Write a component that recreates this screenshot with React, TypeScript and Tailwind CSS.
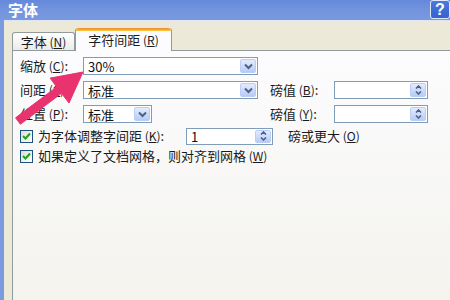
import React from "react";

const font = "font-['SimSun','Noto_Sans_CJK_SC',sans-serif]";

function Chevron() {
  return (
    <svg width="9" height="7" viewBox="0 0 9 7">
      <path d="M1 1.5 L4.5 5 L8 1.5" fill="none" stroke="#4d6185" strokeWidth="2" />
    </svg>
  );
}

function DropBtn() {
  return (
    <div className="w-[16px] h-full border border-[#b9cdf8] rounded-[2px] bg-gradient-to-b from-[#e4ecfd] to-[#b7cbf6] flex items-center justify-center">
      <Chevron />
    </div>
  );
}

function SpinBtn() {
  return (
    <div className="w-[16px] h-full border border-[#b9cdf8] rounded-[2px] bg-gradient-to-b from-[#e4ecfd] to-[#b7cbf6] flex flex-col items-center justify-center gap-[2px]">
      <svg width="7" height="4" viewBox="0 0 7 4">
        <path d="M1 3.5 L3.5 1 L6 3.5" fill="none" stroke="#4d6185" strokeWidth="1.6" />
      </svg>
      <svg width="7" height="4" viewBox="0 0 7 4">
        <path d="M1 0.5 L3.5 3 L6 0.5" fill="none" stroke="#4d6185" strokeWidth="1.6" />
      </svg>
    </div>
  );
}

function Combo({ w, value }: { w: string; value: string }) {
  return (
    <div className={`${w} h-[18px] border border-[#7f9db9] bg-white flex items-stretch p-px`}>
      <div className="flex-1 pl-[3px] text-[13px] leading-[15px] text-[#111]">{value}</div>
      <DropBtn />
    </div>
  );
}

function Spin({ w, h, value }: { w: string; h: string; value: string }) {
  return (
    <div className={`${w} ${h} border border-[#7f9db9] bg-white flex items-stretch p-px`}>
      <div className="flex-1 pl-[3px] text-[13px] leading-[13px] text-[#111]">{value}</div>
      <SpinBtn />
    </div>
  );
}

function Check() {
  return (
    <div className="w-[13px] h-[13px] border border-[#1c5180] bg-gradient-to-br from-[#dcdcd6] to-white flex items-center justify-center">
      <svg width="9" height="8" viewBox="0 0 9 8">
        <path d="M1 4 L3.5 6.5 L8 1.5" fill="none" stroke="#21a121" strokeWidth="2" />
      </svg>
    </div>
  );
}

function L({ t, k }: { t: string; k: string }) {
  return (
    <span>
      {t}
      <span className="text-[12px]">
        {" "}(<span className="underline">{k}</span>)
      </span>
    </span>
  );
}

export default function App() {
  return (
    <div className={`relative w-[450px] h-[300px] overflow-hidden flex flex-col ${font} text-[#1a1a1a]`}>
      <div className="h-[20px] bg-gradient-to-b from-[#6589da] via-[#7394de] to-[#7898e0] flex justify-between items-start">
        <span className="pl-[8px] text-[15px] leading-[19px] font-bold text-white">字体</span>
        <div className="w-[20px] h-[19px] bg-gradient-to-b from-[#4a78dc] to-[#3562cf] border border-[#dfe7fa] rounded-[3px] text-white font-bold text-[16px] leading-[17px] text-center font-['Liberation_Sans',sans-serif]">
          ?
        </div>
      </div>
      <div className="flex-1 flex">
        <div className="w-[4px] bg-[#7b9ae0]" />
        <div className="flex-1 bg-[#ece9d8] border-t border-[#dfe5f3] pl-[8px] pt-[7px] flex flex-col">
          <div className="h-[22px] flex items-end relative z-10">
            <div className="w-[63px] h-[18px] border border-b-0 border-[#919b9c] rounded-t-[3px] bg-gradient-to-b from-white to-[#ecebe6] text-[13px] leading-[17px] text-center">
              <L t="字体" k="N" />
            </div>
            <div className="w-[97px] h-[23px] -mb-px border-x border-[#919b9c] rounded-t-[3px] bg-[#fcfcfe] flex flex-col">
              <div className="h-[3px] rounded-t-[3px] bg-gradient-to-b from-[#e68b2c] to-[#ffc73c]" />
              <div className="text-[13px] leading-[18px] text-center">
                <L t="字符间距" k="R" />
              </div>
            </div>
          </div>
          <div className="flex-1 border-l border-t border-[#919b9c] bg-gradient-to-b from-[#fcfcfe] to-[#f4f3ee] pl-[7px] pt-[3px] text-[13px]">
            <div className="h-[24px] flex items-center">
              <div className="w-[63px]"><L t="缩放" k="C" />:</div>
              <Combo w="w-[175px]" value="30%" />
            </div>
            <div className="h-[24px] flex items-center">
              <div className="w-[63px]"><L t="间距" k="S" />:</div>
              <Combo w="w-[175px]" value="标准" />
              <div className="w-[64px] ml-[12px]"><L t="磅值" k="B" />:</div>
              <Spin w="w-[94px]" h="h-[18px]" value="" />
            </div>
            <div className="h-[24px] flex items-center">
              <div className="w-[63px]"><L t="位置" k="P" />:</div>
              <Combo w="w-[69px]" value="标准" />
              <div className="w-[64px] ml-[118px]"><L t="磅值" k="Y" />:</div>
              <Spin w="w-[94px]" h="h-[18px]" value="" />
            </div>
            <div className="h-[20px] flex items-center">
              <Check />
              <div className="ml-[5px] w-[148px]"><L t="为字体调整字间距" k="K" />:</div>
              <Spin w="w-[87px]" h="h-[17px]" value="1" />
              <div className="ml-[15px]"><L t="磅或更大" k="O" /></div>
            </div>
            <div className="h-[20px] flex items-center">
              <Check />
              <div className="ml-[5px]"><L t="如果定义了文档网格，则对齐到网格" k="W" /></div>
            </div>
          </div>
        </div>
      </div>
      <svg className="absolute left-0 top-0 pointer-events-none" width="120" height="140" viewBox="0 0 120 140">
        <polygon
          points="15.6,117.8 56.7,86.9 50.1,78.1 83,72 69,103 61.5,93.3 20.4,124.2"
          fill="#e8336f"
          stroke="#e8336f"
          strokeWidth="1"
          strokeLinejoin="round"
        />
      </svg>
    </div>
  );
}
